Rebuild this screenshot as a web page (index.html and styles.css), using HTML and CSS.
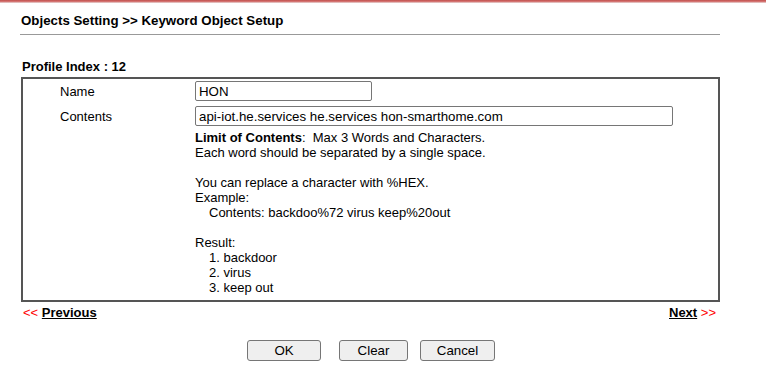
FILE: index.html
```html
<!DOCTYPE html>
<html>
<head>
<meta charset="utf-8">
<link rel="stylesheet" href="styles.css">
</head>
<body>
<div class="topbar"></div>
<div class="page">
  <div class="title">Objects Setting &gt;&gt; Keyword Object Setup</div>
  <div class="profile">Profile Index : 12</div>
  <div class="box">
    <div class="row">
      <div class="label">Name</div>
      <div class="value"><input class="inp name" type="text" value="HON"></div>
    </div>
    <div class="row">
      <div class="label">Contents</div>
      <div class="value">
        <input class="inp contents" type="text" value="api-iot.he.services he.services hon-smarthome.com">
        <div class="help">
          <div><b>Limit of Contents</b>:&nbsp; Max 3 Words and Characters.</div>
          <div>Each word should be separated by a single space.</div>
          <div class="blank"></div>
          <div>You can replace a character with %HEX.</div>
          <div>Example:</div>
          <div class="ind">Contents: backdoo%72 virus keep%20out</div>
          <div class="blank"></div>
          <div>Result:</div>
          <div class="ind">1. backdoor</div>
          <div class="ind">2. virus</div>
          <div class="ind">3. keep out</div>
        </div>
      </div>
    </div>
  </div>
  <div class="nav">
    <span><span class="arr">&lt;&lt;</span> <a href="#">Previous</a></span>
    <span><a href="#">Next</a> <span class="arr">&gt;&gt;</span></span>
  </div>
  <div class="buttons">
    <button class="btn ok">OK</button>
    <button class="btn clear">Clear</button>
    <button class="btn cancel">Cancel</button>
  </div>
</div>
</body>
</html>
```
FILE: styles.css
```css
html, body {
  margin: 0;
  padding: 0;
  background: #fff;
}
body {
  font-family: "Liberation Sans", Arial, sans-serif;
  font-size: 13px;
  color: #000;
}
.topbar {
  height: 3px;
  background: linear-gradient(#c0504d, #d97a78 60%, #e8e8e8);
}
.page {
  width: 700px;
  padding-left: 20px;
}
.title {
  font-weight: bold;
  font-size: 13.3px;
  padding-top: 11px;
  height: 20px;
  line-height: 14px;
  border-bottom: 1px solid #999;
  padding-left: 1px;
}
.profile {
  font-weight: bold;
  margin-top: 25px;
  margin-bottom: 3px;
  padding-left: 2px;
  line-height: 14px;
}
.box {
  margin-left: 1px;
  border: 2px solid #555;
  padding: 0 0 2px;
}
.row {
  display: flex;
}
.label {
  width: 135px;
  padding-left: 37px;
  line-height: 20px;
  padding-top: 3px;
}
.value {
  padding-top: 2px;
  padding-bottom: 3px;
}
.inp {
  font-family: "Liberation Sans", Arial, sans-serif;
  font-size: 13.3px;
  height: 20px;
  box-sizing: border-box;
  border: 1px solid #767676;
  border-radius: 2px;
  padding: 0 3px;
  margin: 0;
  color: #000;
  display: block;
}
.name { width: 177px; }
.contents { width: 478px; }
.help {
  margin-top: 4px;
  line-height: 15px;
}
.blank { height: 15px; }
.ind { padding-left: 14px; }
.nav {
  display: flex;
  justify-content: space-between;
  padding: 3px 4px 0 3px;
  line-height: 15px;
  font-size: 13px;
}
.arr { color: #f00; }
.nav a {
  color: #000;
  font-weight: bold;
  text-decoration: underline;
}
.buttons {
  display: flex;
  justify-content: center;
  gap: 18px;
  margin-top: 20px;
  padding-left: 2px;
}
.btn {
  font-family: "Liberation Sans", Arial, sans-serif;
  font-size: 13.3px;
  height: 21px;
  border: 1px solid #767676;
  border-radius: 3px;
  background: #efefef;
  color: #000;
  padding: 0;
}
.ok { width: 74px; }
.clear { width: 69px; margin-right: -6px; }
.cancel { width: 75px; }
```
